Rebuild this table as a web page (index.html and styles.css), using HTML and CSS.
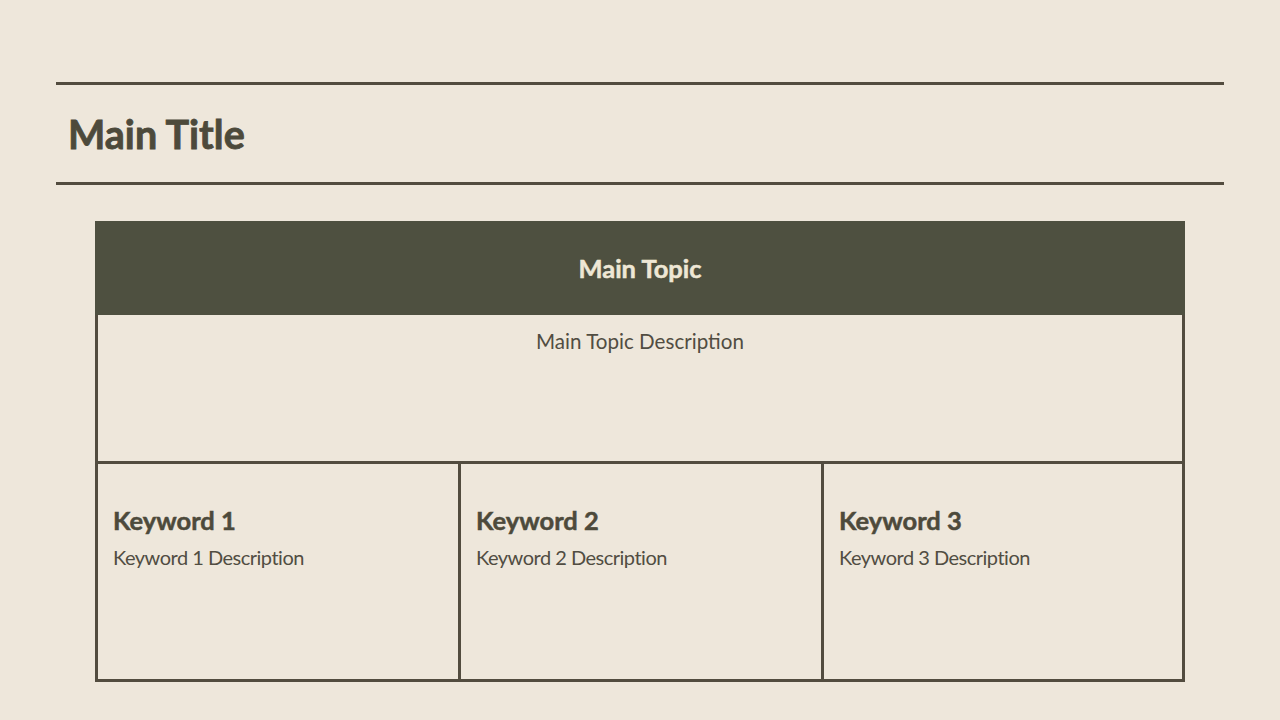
FILE: index.html
```html
<!DOCTYPE html>
<html lang="en">
<head>
<meta charset="utf-8">
<title>Main Title</title>
<link rel="stylesheet" href="styles.css">
</head>
<body>
<div class="page">
  <header class="title-bar">
    <h1 class="title">Main Title</h1>
  </header>
  <section class="board">
    <div class="topic-head">Main Topic</div>
    <div class="topic-body">
      <p class="topic-desc">Main Topic Description</p>
    </div>
    <div class="keywords">
      <div class="kw">
        <h2 class="kw-title">Keyword 1</h2>
        <p class="kw-desc">Keyword 1 Description</p>
      </div>
      <div class="kw">
        <h2 class="kw-title">Keyword 2</h2>
        <p class="kw-desc">Keyword 2 Description</p>
      </div>
      <div class="kw">
        <h2 class="kw-title">Keyword 3</h2>
        <p class="kw-desc">Keyword 3 Description</p>
      </div>
    </div>
  </section>
</div>
</body>
</html>
```
FILE: styles.css
```css
html, body {
  margin: 0;
  padding: 0;
  background: #eee7db;
}
body {
  font-family: "Lato", "Liberation Sans", sans-serif;
  color: #4d4a3c;
  width: 1280px;
  height: 720px;
  overflow: hidden;
}
.page {
  padding: 82px 56px 0 56px;
}
.title-bar {
  border-top: 3px solid #524c3f;
  border-bottom: 3px solid #524c3f;
  height: 97px;
  display: flex;
  align-items: center;
  padding: 0 12px;
}
.title {
  margin: 0;
  font-size: 39.5px;
  font-weight: 700;
  color: #4d4a3b;
  line-height: 1;
  -webkit-text-stroke: 0.8px #4d4a3b;
}
.board {
  margin: 36px 39px 0 39px;
}
.topic-head {
  background: #4e5040;
  color: #eee7d5;
  height: 94px;
  display: flex;
  align-items: center;
  justify-content: center;
  font-size: 25.5px;
  font-weight: 700;
  -webkit-text-stroke: 0.5px #eee7d5;
}
.topic-body {
  border-left: 3px solid #524c3f;
  border-right: 3px solid #524c3f;
  border-bottom: 3px solid #524c3f;
  box-sizing: border-box;
  height: 149px;
  padding-top: 14px;
}
.topic-desc {
  margin: 0;
  text-align: center;
  font-size: 20.6px;
  color: #514d42;
}
.keywords {
  display: grid;
  grid-template-columns: 360px 363px 1fr;
  border-left: 3px solid #524c3f;
  border-right: 3px solid #524c3f;
  border-bottom: 3px solid #524c3f;
  height: 218px;
  box-sizing: border-box;
}
.kw {
  padding: 41px 15px 0 15px;
}
.kw + .kw {
  border-left: 3px solid #524c3f;
}
.kw-title {
  margin: 0;
  font-size: 25.5px;
  font-weight: 700;
  line-height: 30px;
  color: #4d4a3b;
  -webkit-text-stroke: 0.5px #4d4a3b;
}
.kw-desc {
  margin: 9px 0 0 0;
  font-size: 20px;
  line-height: 26px;
  color: #514d42;
  letter-spacing: -0.5px;
}
```
